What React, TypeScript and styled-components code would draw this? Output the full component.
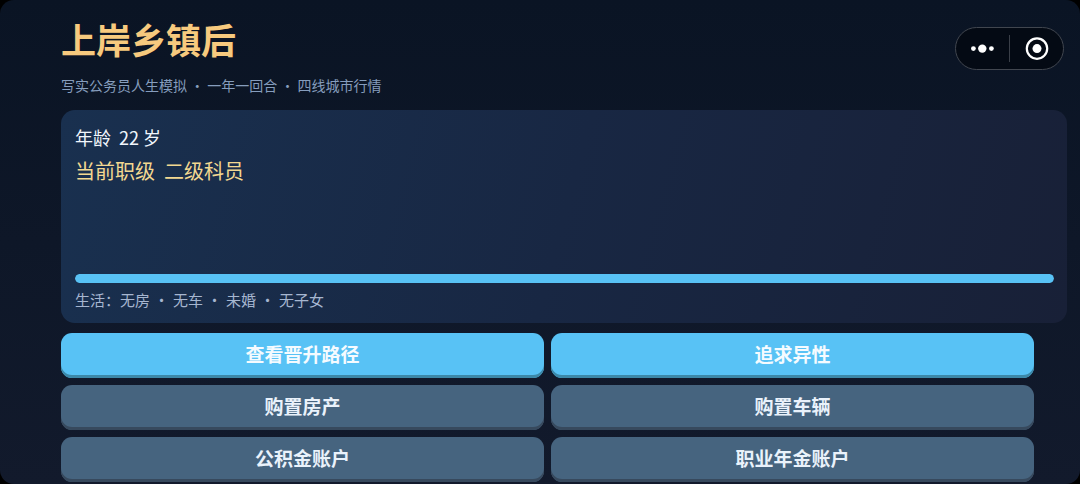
import React from "react";
import styled, { createGlobalStyle } from "styled-components";

const GlobalStyle = createGlobalStyle`
  *, *::before, *::after { box-sizing: border-box; }
  body {
    margin: 0;
    background: #000;
    font-family: "Noto Sans CJK SC", "Noto Sans", sans-serif;
  }
`;

const Page = styled.div`
  position: relative;
  min-height: 100vh;
  padding: 13px 13px 1px 61px;
  border-radius: 14px;
  background: linear-gradient(180deg, #0a1424 0%, #121a2c 100%);
`;

const Title = styled.h1`
  margin: 0;
  font-size: 35px;
  font-weight: 700;
  line-height: 52px;
  color: #f7ca7e;
`;

const Subtitle = styled.p`
  margin: 10px 0 14px;
  font-size: 14px;
  line-height: 21px;
  color: #869dbd;
`;

const Capsule = styled.div`
  position: absolute;
  top: 27px;
  right: 16px;
  display: flex;
  align-items: center;
  width: 109px;
  height: 43px;
  border: 1px solid #41464f;
  border-radius: 22px;
  background: #040a14;
`;

const CapsuleButton = styled.button`
  flex: 1;
  display: flex;
  align-items: center;
  justify-content: center;
  height: 100%;
  padding: 0;
  border: 0;
  background: none;
  color: #fff;
  cursor: pointer;
`;

const CapsuleDivider = styled.span`
  width: 1px;
  height: 27px;
  background: #3a3f48;
`;

const StatusCard = styled.section`
  display: flex;
  flex-direction: column;
  min-height: 213px;
  padding: 13px 13px 12px 14px;
  border-radius: 14px;
  background: linear-gradient(105deg, #19304f 0%, #182743 50%, #182037 100%);
`;

const Age = styled.p`
  margin: 0;
  font-size: 18px;
  line-height: 28px;
  color: #f1f6fc;
  white-space: pre;
`;

const Rank = styled.p`
  margin: 4px 0 0;
  font-size: 20px;
  line-height: 32px;
  color: #f3d891;
  white-space: pre;
`;

const Progress = styled.div`
  height: 9px;
  margin-top: auto;
  border-radius: 5px;
  background: #24344f;
  overflow: hidden;
`;

const ProgressFill = styled.div`
  height: 100%;
  border-radius: 5px;
  background: #58c2f5;
`;

const Life = styled.p`
  display: flex;
  margin: 6px 0 0;
  font-size: 15px;
  line-height: 22px;
  color: #a6b6d0;
`;

const Separator = styled.span`
  width: 23px;
  text-align: center;
`;

const Actions = styled.div`
  display: grid;
  grid-template-columns: 1fr 1fr;
  gap: 7px;
  margin: 10px 33px 0 0;
`;

const ActionButton = styled.button<{ $primary?: boolean }>`
  height: 45px;
  padding: 0 12px 3px;
  border: 0;
  border-radius: 11px;
  background: ${({ $primary }) => ($primary ? "#58c2f5" : "#46647f")};
  box-shadow: inset 0 -3px 0 ${({ $primary }) => ($primary ? "#3c88a8" : "#37495d")};
  font-family: inherit;
  font-size: 19px;
  font-weight: 700;
  line-height: 28px;
  color: ${({ $primary }) => ($primary ? "#f5fbff" : "#eaf2fb")};
  cursor: pointer;
`;

const actions = [
  { label: "查看晋升路径", primary: true },
  { label: "追求异性", primary: true },
  { label: "购置房产" },
  { label: "购置车辆" },
  { label: "公积金账户" },
  { label: "职业年金账户" },
];

const lifeStatus = ["无房", "无车", "未婚", "无子女"];

const promotionProgress = 100;

export default function App() {
  return (
    <>
      <GlobalStyle />
      <Page lang="zh-CN">
        <header>
          <Title>上岸乡镇后</Title>
          <Subtitle>写实公务员人生模拟 · 一年一回合 · 四线城市行情</Subtitle>
        </header>
        <Capsule>
          <CapsuleButton type="button" aria-label="更多">
            <svg width="24" height="10" viewBox="0 0 24 10" fill="currentColor">
              <circle cx="2.4" cy="4.6" r="2.4" />
              <circle cx="11.3" cy="4.6" r="4.2" />
              <circle cx="20.4" cy="4.6" r="2.4" />
            </svg>
          </CapsuleButton>
          <CapsuleDivider />
          <CapsuleButton type="button" aria-label="关闭">
            <svg width="24" height="24" viewBox="0 0 24 24">
              <circle cx="12" cy="11.6" r="10.2" fill="none" stroke="currentColor" strokeWidth="2.2" />
              <circle cx="12" cy="11.6" r="4.5" fill="currentColor" />
            </svg>
          </CapsuleButton>
        </Capsule>
        <main>
          <StatusCard>
            <Age>{"年龄  22 岁"}</Age>
            <Rank>{"当前职级  二级科员"}</Rank>
            <Progress>
              <ProgressFill style={{ width: `${promotionProgress}%` }} />
            </Progress>
            <Life>
              <span>生活：</span>
              {lifeStatus.map((item, index) => (
                <React.Fragment key={item}>
                  {index > 0 && <Separator>·</Separator>}
                  <span>{item}</span>
                </React.Fragment>
              ))}
            </Life>
          </StatusCard>
          <Actions>
            {actions.map(({ label, primary }) => (
              <ActionButton key={label} type="button" $primary={primary}>
                {label}
              </ActionButton>
            ))}
          </Actions>
        </main>
      </Page>
    </>
  );
}
